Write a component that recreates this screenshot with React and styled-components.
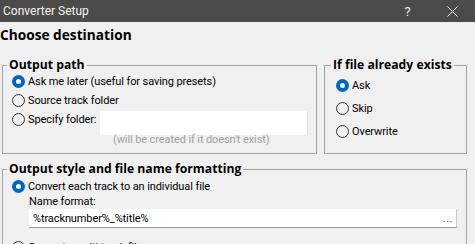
import React from "react";
import styled, { createGlobalStyle } from "styled-components";

const Global = createGlobalStyle`
  html, body { margin: 0; padding: 0; background: #f0f0f0; }
  body { width: 475px; height: 244px; overflow: hidden; font-family: Roboto, "Liberation Sans", sans-serif; font-size: 11px; letter-spacing: -0.1px; color: #000; }
  * { box-sizing: border-box; }
`;

const Window = styled.div`
  width: 475px;
  height: 244px;
  overflow: hidden;
  background: #f0f0f0;
  display: flex;
  flex-direction: column;
`;

const TitleBar = styled.div`
  height: 22px;
  flex: none;
  background: #4d4b49;
  color: #f2f2f2;
  display: flex;
  align-items: center;
`;

const TitleText = styled.div`
  flex: 1;
  padding-left: 3px;
  font-size: 12px;
  letter-spacing: 0;
  line-height: 22px;
`;

const TitleButton = styled.div`
  width: 45px;
  height: 22px;
  display: flex;
  align-items: center;
  justify-content: center;
  color: #e8e8e8;
  font-size: 13px;
`;

const Body = styled.div`
  display: flex;
  flex-direction: column;
  padding: 0 9px 0 2px;
`;

const Heading = styled.div`
  font-family: "Open Sans", sans-serif;
  font-weight: bold;
  font-size: 13.7px;
  letter-spacing: 0;
  line-height: 20px;
  height: 20px;
  margin: 3px 0 0 -2px;
`;

const TopRow = styled.div`
  display: flex;
  gap: 7px;
  margin-top: 13px;
`;

const Group = styled.fieldset`
  margin: 0;
  border: 1px solid #a3a3a3;
  padding: ${(p) => p.$pad || "0 6px 0 9px"};
  width: ${(p) => p.$w}px;
  height: ${(p) => p.$h}px;
  min-width: 0;
  flex: none;
`;

const Legend = styled.legend`
  font-family: "Open Sans", sans-serif;
  font-weight: bold;
  font-size: 12.2px;
  letter-spacing: 0;
  line-height: 14px;
  padding: 0 2px;
  white-space: nowrap;
  margin-left: -5px;
`;

const Col = styled.div`
  display: flex;
  flex-direction: column;
`;

const RadioRow = styled.label`
  display: flex;
  align-items: center;
  height: ${(p) => p.$h || 19}px;
  gap: 3px;
  white-space: nowrap;
`;

const RadioCircle = styled.span`
  width: 13px;
  height: 13px;
  border-radius: 50%;
  flex: none;
  border: ${(p) => (p.$on ? "4px solid #0067c0" : "1px solid #333")};
  background: ${(p) => (p.$on ? "#fff" : "transparent")};
`;

const Radio = ({ on, children, h }) => (
  <RadioRow $h={h}>
    <RadioCircle $on={on} />
    <span>{children}</span>
  </RadioRow>
);

const FolderRow = styled.div`
  display: flex;
  align-items: flex-start;
`;

const FolderInput = styled.div`
  width: 208px;
  height: 24px;
  margin: 1px 0 0 4px;
  background: #fff;
  border-right: 1px solid #e3e3e3;
`;

const Hint = styled.div`
  color: #a0a0a0;
  line-height: 14px;
  margin: -2px 0 0 101px;
`;

const StyleGroupWrap = styled.div`
  margin-top: 8px;
`;

const Label = styled.div`
  line-height: 14px;
  margin: -1px 0 0 17px;
`;

const TextField = styled.div`
  margin: 0 0 0 17px;
  height: 19px;
  background: #fff;
  border-bottom: 1px solid #9a9a9a;
  border-right: 1px solid #c8c8c8;
  display: flex;
  align-items: center;
  padding: 0 3px 0 4px;
  justify-content: space-between;
`;

const Dots = styled.span`
  color: #5b2a9e;
  letter-spacing: 0.5px;
`;

export default function App() {
  return (
    <>
      <Global />
      <Window>
        <TitleBar>
          <TitleText>Converter Setup</TitleText>
          <TitleButton>?</TitleButton>
          <TitleButton>
            <svg width="11" height="11" viewBox="0 0 11 11">
              <path d="M0.5 0.5 L10.5 10.5 M10.5 0.5 L0.5 10.5" stroke="#e8e8e8" strokeWidth="1" />
            </svg>
          </TitleButton>
        </TitleBar>
        <Body>
          <Heading>Choose destination</Heading>
          <TopRow>
            <Group $w={315} $h={96}>
              <Legend>Output path</Legend>
              <Col>
                <Radio on>Ask me later (useful for saving presets)</Radio>
                <Radio>Source track folder</Radio>
                <FolderRow>
                  <Radio>Specify folder:</Radio>
                  <FolderInput />
                </FolderRow>
                <Hint>(will be created if it doesn't exist)</Hint>
              </Col>
            </Group>
            <Group $w={143} $h={96} $pad="2px 4px 0 11px">
              <Legend>If file already exists</Legend>
              <Col>
                <Radio on h={23}>Ask</Radio>
                <Radio h={23}>Skip</Radio>
                <Radio h={23}>Overwrite</Radio>
              </Col>
            </Group>
          </TopRow>
          <StyleGroupWrap>
            <Group $w={465} $h={120} $pad="1px 9px 0 9px">
              <Legend>Output style and file name formatting</Legend>
              <Col>
                <Radio on>Convert each track to an individual file</Radio>
                <Label>Name format:</Label>
                <TextField>
                  <span>%tracknumber%_%title%</span>
                  <Dots>...</Dots>
                </TextField>
                <Radio h={39}>Generate multi-track files</Radio>
              </Col>
            </Group>
          </StyleGroupWrap>
        </Body>
      </Window>
    </>
  );
}
